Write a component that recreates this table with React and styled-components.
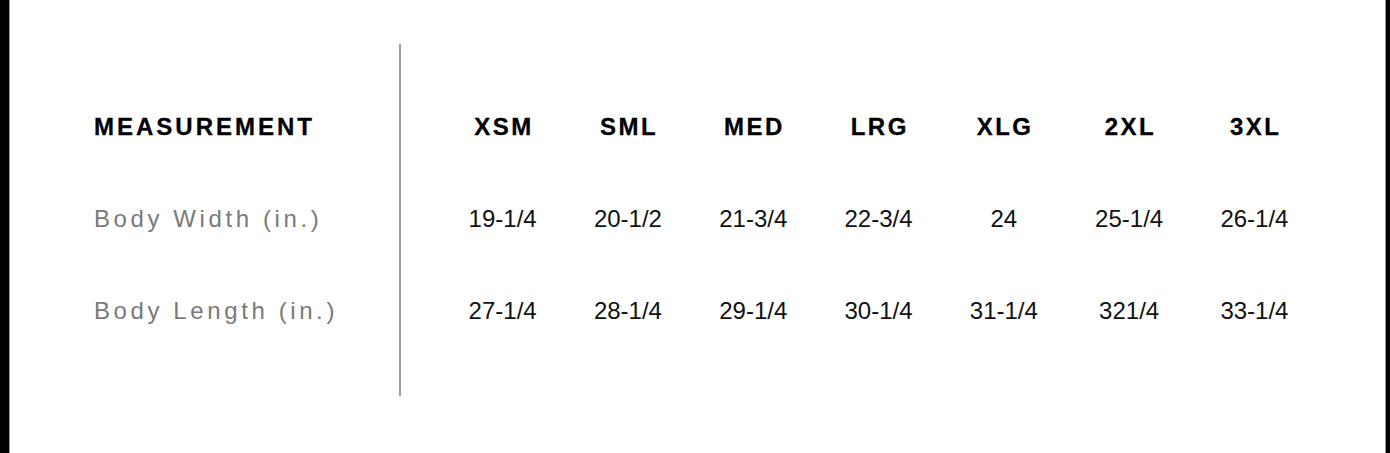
import React from "react";
import styled, { createGlobalStyle } from "styled-components";

const sizes = ["XSM", "SML", "MED", "LRG", "XLG", "2XL", "3XL"];

const rows = [
  {
    label: "Body Width (in.)",
    values: ["19-1/4", "20-1/2", "21-3/4", "22-3/4", "24", "25-1/4", "26-1/4"],
  },
  {
    label: "Body Length (in.)",
    values: ["27-1/4", "28-1/4", "29-1/4", "30-1/4", "31-1/4", "321/4", "33-1/4"],
  },
];

function App() {
  return (
    <>
      <GlobalStyle />
      <Panel>
        <Chart>
          <Labels>
            <HeadLabel>Measurement</HeadLabel>
            {rows.map((row) => (
              <RowLabel key={row.label}>{row.label}</RowLabel>
            ))}
          </Labels>
          <Divider />
          <Sizes>
            {sizes.map((size) => (
              <SizeHead key={size}>{size}</SizeHead>
            ))}
            {rows.map((row) =>
              row.values.map((value, i) => (
                <Value key={row.label + i}>{value}</Value>
              ))
            )}
          </Sizes>
        </Chart>
      </Panel>
    </>
  );
}

export default App;

const GlobalStyle = createGlobalStyle`
  html, body {
    margin: 0;
    padding: 0;
    background: #000;
  }

  body {
    font-family: "Liberation Sans", Arial, Helvetica, sans-serif;
  }
`;

const Panel = styled.div`
  height: 453px;
  margin: 0 4px 0 9px;
  background: #fff;
  border-left: 1px solid #9a9a9a;
  border-right: 1px solid #9a9a9a;
  box-sizing: border-box;
  display: flex;
  flex-direction: column;
`;

const Chart = styled.div`
  margin-top: 44px;
  height: 352px;
  display: flex;
`;

const Labels = styled.div`
  width: 389px;
  box-sizing: border-box;
  padding: 37px 0 39px 84px;
  display: grid;
  grid-template-rows: repeat(3, 92px);
  align-items: center;
`;

const Divider = styled.div`
  width: 2px;
  background: #9b9b9b;
`;

const Sizes = styled.div`
  padding: 37px 0 39px 39px;
  display: grid;
  grid-template-columns: repeat(7, 125.3px);
  grid-template-rows: repeat(3, 92px);
  align-items: center;
  justify-items: center;
`;

const HeadLabel = styled.div`
  font-size: 24px;
  font-weight: 700;
  letter-spacing: 3px;
  text-transform: uppercase;
  color: #000;
  line-height: 1;
  -webkit-text-stroke: 0.3px #000;
`;

const RowLabel = styled.div`
  font-size: 24px;
  letter-spacing: 3.6px;
  color: #7a7a7a;
  line-height: 1;
`;

const SizeHead = styled.div`
  font-size: 24px;
  font-weight: 700;
  letter-spacing: 2.5px;
  margin-right: -2.5px;
  color: #000;
  line-height: 1;
  -webkit-text-stroke: 0.3px #000;
`;

const Value = styled.div`
  font-size: 24px;
  color: #111;
  line-height: 1;
`;
